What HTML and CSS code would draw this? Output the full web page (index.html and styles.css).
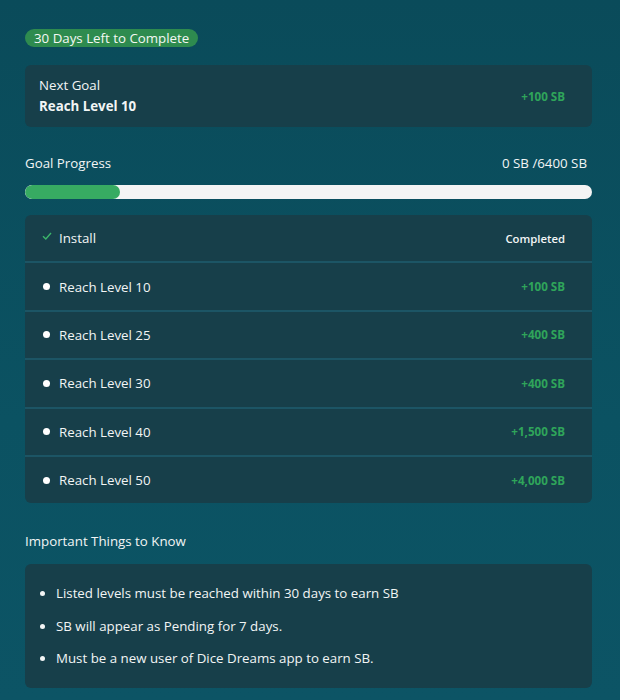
FILE: index.html
```html
<!DOCTYPE html>
<html lang="en">
<head>
  <meta charset="UTF-8">
  <meta name="viewport" content="width=device-width, initial-scale=1.0">
  <title>Goal Progress</title>
  <link rel="stylesheet" href="styles.css">
</head>
<body>
  <div class="offer">
    <span class="days-badge">30 Days Left to Complete</span>

    <!-- Next goal card -->
    <div class="next-goal">
      <div>
        <div class="next-label">Next Goal</div>
        <div class="next-title">Reach Level 10</div>
      </div>
      <span class="reward">+100 SB</span>
    </div>

    <!-- Progress -->
    <div class="progress-head">
      <span>Goal Progress</span>
      <span>0 SB /6400 SB</span>
    </div>
    <div class="progress-track">
      <div class="progress-fill" style="width: 16.8%;"></div>
    </div>

    <!-- Goal list -->
    <ul class="goals">
      <li class="goal">
        <span class="goal-name">
          <svg class="check" width="10" height="10" viewBox="0 0 10 10"><path d="M1 5.2 L3.8 8 L9 2" fill="none" stroke="#3bb56a" stroke-width="1.4"/></svg>
          Install
        </span>
        <span class="status">Completed</span>
      </li>
      <li class="goal"><span class="goal-name"><i class="dot"></i>Reach Level 10</span><span class="reward">+100 SB</span></li>
      <li class="goal"><span class="goal-name"><i class="dot"></i>Reach Level 25</span><span class="reward">+400 SB</span></li>
      <li class="goal"><span class="goal-name"><i class="dot"></i>Reach Level 30</span><span class="reward">+400 SB</span></li>
      <li class="goal"><span class="goal-name"><i class="dot"></i>Reach Level 40</span><span class="reward">+1,500 SB</span></li>
      <li class="goal"><span class="goal-name"><i class="dot"></i>Reach Level 50</span><span class="reward">+4,000 SB</span></li>
    </ul>

    <h2 class="section-title">Important Things to Know</h2>
    <div class="info">
      <ul>
        <li>Listed levels must be reached within 30 days to earn SB</li>
        <li>SB will appear as Pending for 7 days.</li>
        <li>Must be a new user of Dice Dreams app to earn SB.</li>
      </ul>
    </div>
  </div>
</body>
</html>
```

FILE: styles.css
```css
body {
  margin: 0;
  min-height: 100vh;
  font-family: 'Open Sans', sans-serif;
  font-size: 13.3px;
  color: #f2f5f5;
  background: linear-gradient(180deg, #0a4b5a 0%, #0b5262 60%, #0c5465 100%);
}

.offer {
  padding: 29px 28px 12px 25px;
}

.days-badge {
  display: inline-block;
  background-color: #2e8b4f;
  color: #f4f8f4;
  font-size: 13.3px;
  line-height: 18px;
  padding: 0 9px;
  border-radius: 10px;
}

.next-goal {
  margin-top: 18px;
  height: 62px;
  box-sizing: border-box;
  padding: 0 27px 0 14px;
  background-color: #173f4a;
  border-radius: 6px;
  display: flex;
  align-items: center;
  justify-content: space-between;
}

.next-label {
  line-height: 20px;
}

.next-title {
  font-weight: 700;
  line-height: 22px;
}

.reward {
  color: #2fa55a;
  font-weight: 700;
  font-size: 11.6px;
}

.progress-head {
  margin-top: 27px;
  padding-right: 5px;
  display: flex;
  justify-content: space-between;
  line-height: 18px;
}

.progress-track {
  margin-top: 13px;
  height: 14px;
  background-color: #f4f4f4;
  border-radius: 7px;
  overflow: hidden;
}

.progress-fill {
  height: 100%;
  background-color: #37ab62;
  border-radius: 7px;
}

.goals {
  list-style: none;
  margin: 16px 0 0;
  padding: 0;
  border-radius: 6px;
  overflow: hidden;
}

.goal {
  height: 46.4px;
  padding: 0 27px 0 17px;
  background-color: #173f4a;
  border-bottom: 2px solid #1c5565;
  display: flex;
  align-items: center;
  justify-content: space-between;
}

.goal:last-child {
  border-bottom: none;
}

.goal-name {
  display: flex;
  align-items: center;
}

.check {
  margin-right: 7px;
  margin-top: -5px;
}

.dot {
  width: 7px;
  height: 7px;
  border-radius: 50%;
  background-color: #fff;
  margin: 0 9px 0 1px;
}

.status {
  font-size: 11.3px;
  font-weight: 600;
}

.section-title {
  margin: 29px 0 0;
  font-size: 13.3px;
  font-weight: 400;
  line-height: 18px;
}

.info {
  margin-top: 14px;
  background-color: #173f4a;
  border-radius: 6px;
  padding: 20px 0 20px;
}

.info ul {
  margin: 0;
  padding-left: 31px;
}

.info li {
  line-height: 18.5px;
  margin-bottom: 14px;
}

.info li:last-child {
  margin-bottom: 0;
}
```
